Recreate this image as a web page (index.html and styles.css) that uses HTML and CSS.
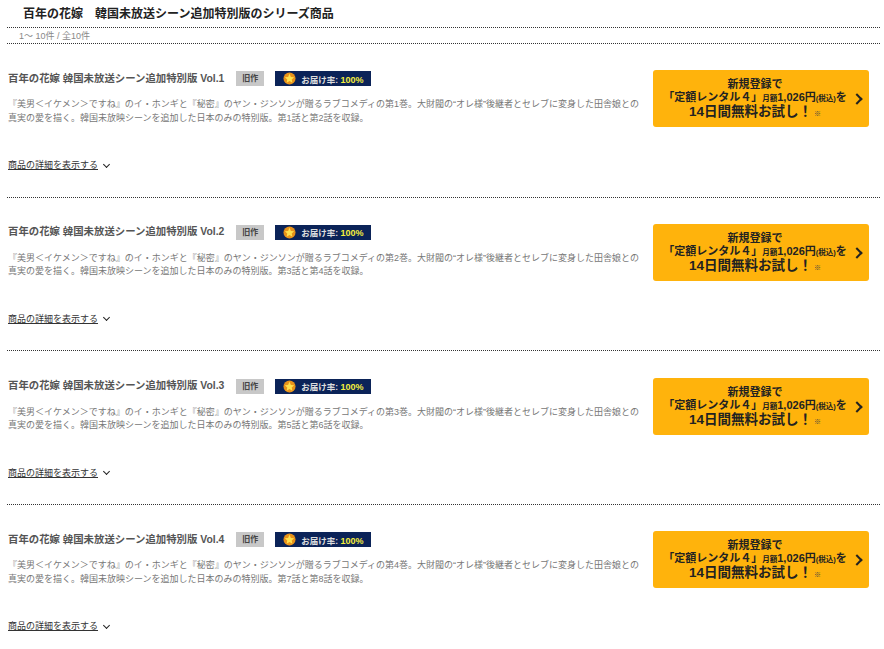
FILE: index.html
```html
<!DOCTYPE html>
<html lang="ja">
<head>
    <meta charset="UTF-8">
    <title>百年の花嫁 シリーズ商品</title>
    <link rel="stylesheet" href="styles.css">
</head>
<body>
    <!-- Header -->
    <h1 class="page-title">百年の花嫁　韓国未放送シーン追加特別版のシリーズ商品</h1>
    <div class="result-count">1～ 10件 / 全10件</div>

    <!-- Item list -->
    <div class="item">
        <div class="item-main">
            <div class="item-head">
                <h2>百年の花嫁 韓国未放送シーン追加特別版 Vol.1</h2>
                <span class="tag-old">旧作</span>
                <span class="tag-rate">
                    <svg class="star" viewBox="0 0 14 14"><circle cx="7" cy="7" r="6.5" fill="#e8921a"/><polygon points="7,2 8.5,5.3 12,5.7 9.4,8 10.1,11.5 7,9.7 3.9,11.5 4.6,8 2,5.7 5.5,5.3" fill="#ffe14d"/></svg>
                    <span>お届け率: <b>100%</b></span>
                </span>
            </div>
            <p class="desc">『美男＜イケメン＞ですね』のイ・ホンギと『秘密』のヤン・ジンソンが贈るラブコメディの第1巻。大財閥の“オレ様”後継者とセレブに変身した田舎娘との<br>真実の愛を描く。韓国未放映シーンを追加した日本のみの特別版。第1話と第2話を収録。</p>
            <div class="detail"><a href="#">商品の詳細を表示する</a><span class="caret"></span></div>
        </div>
        <a class="cta" href="#">
            <span class="cta-l1">新規登録で</span>
            <span class="cta-l2">「定額レンタル４」<small>月額</small>1,026円<small>(税込)</small>を</span>
            <span class="cta-l3">14日間無料お試し！<small>※</small></span>
        </a>
    </div>

    <div class="item">
        <div class="item-main">
            <div class="item-head">
                <h2>百年の花嫁 韓国未放送シーン追加特別版 Vol.2</h2>
                <span class="tag-old">旧作</span>
                <span class="tag-rate">
                    <svg class="star" viewBox="0 0 14 14"><circle cx="7" cy="7" r="6.5" fill="#e8921a"/><polygon points="7,2 8.5,5.3 12,5.7 9.4,8 10.1,11.5 7,9.7 3.9,11.5 4.6,8 2,5.7 5.5,5.3" fill="#ffe14d"/></svg>
                    <span>お届け率: <b>100%</b></span>
                </span>
            </div>
            <p class="desc">『美男＜イケメン＞ですね』のイ・ホンギと『秘密』のヤン・ジンソンが贈るラブコメディの第2巻。大財閥の“オレ様”後継者とセレブに変身した田舎娘との<br>真実の愛を描く。韓国未放映シーンを追加した日本のみの特別版。第3話と第4話を収録。</p>
            <div class="detail"><a href="#">商品の詳細を表示する</a><span class="caret"></span></div>
        </div>
        <a class="cta" href="#">
            <span class="cta-l1">新規登録で</span>
            <span class="cta-l2">「定額レンタル４」<small>月額</small>1,026円<small>(税込)</small>を</span>
            <span class="cta-l3">14日間無料お試し！<small>※</small></span>
        </a>
    </div>

    <div class="item">
        <div class="item-main">
            <div class="item-head">
                <h2>百年の花嫁 韓国未放送シーン追加特別版 Vol.3</h2>
                <span class="tag-old">旧作</span>
                <span class="tag-rate">
                    <svg class="star" viewBox="0 0 14 14"><circle cx="7" cy="7" r="6.5" fill="#e8921a"/><polygon points="7,2 8.5,5.3 12,5.7 9.4,8 10.1,11.5 7,9.7 3.9,11.5 4.6,8 2,5.7 5.5,5.3" fill="#ffe14d"/></svg>
                    <span>お届け率: <b>100%</b></span>
                </span>
            </div>
            <p class="desc">『美男＜イケメン＞ですね』のイ・ホンギと『秘密』のヤン・ジンソンが贈るラブコメディの第3巻。大財閥の“オレ様”後継者とセレブに変身した田舎娘との<br>真実の愛を描く。韓国未放映シーンを追加した日本のみの特別版。第5話と第6話を収録。</p>
            <div class="detail"><a href="#">商品の詳細を表示する</a><span class="caret"></span></div>
        </div>
        <a class="cta" href="#">
            <span class="cta-l1">新規登録で</span>
            <span class="cta-l2">「定額レンタル４」<small>月額</small>1,026円<small>(税込)</small>を</span>
            <span class="cta-l3">14日間無料お試し！<small>※</small></span>
        </a>
    </div>

    <div class="item">
        <div class="item-main">
            <div class="item-head">
                <h2>百年の花嫁 韓国未放送シーン追加特別版 Vol.4</h2>
                <span class="tag-old">旧作</span>
                <span class="tag-rate">
                    <svg class="star" viewBox="0 0 14 14"><circle cx="7" cy="7" r="6.5" fill="#e8921a"/><polygon points="7,2 8.5,5.3 12,5.7 9.4,8 10.1,11.5 7,9.7 3.9,11.5 4.6,8 2,5.7 5.5,5.3" fill="#ffe14d"/></svg>
                    <span>お届け率: <b>100%</b></span>
                </span>
            </div>
            <p class="desc">『美男＜イケメン＞ですね』のイ・ホンギと『秘密』のヤン・ジンソンが贈るラブコメディの第4巻。大財閥の“オレ様”後継者とセレブに変身した田舎娘との<br>真実の愛を描く。韓国未放映シーンを追加した日本のみの特別版。第7話と第8話を収録。</p>
            <div class="detail"><a href="#">商品の詳細を表示する</a><span class="caret"></span></div>
        </div>
        <a class="cta" href="#">
            <span class="cta-l1">新規登録で</span>
            <span class="cta-l2">「定額レンタル４」<small>月額</small>1,026円<small>(税込)</small>を</span>
            <span class="cta-l3">14日間無料お試し！<small>※</small></span>
        </a>
    </div>
</body>
</html>
```

FILE: styles.css
```css
body {
    font-family: "Liberation Sans", "Noto Sans CJK JP", sans-serif;
    background: white;
    color: #555;
    margin: 0;
    padding: 0 4px 0 7px;
}

.page-title {
    font-size: 12px;
    line-height: 16px;
    color: #222;
    margin: 0;
    padding: 6px 0 5px 16px;
    border-bottom: 1px dotted #333;
}

.result-count {
    font-size: 9px;
    line-height: 14px;
    color: #888;
    padding: 1px 0 0 12px;
    border-bottom: 1px dotted #333;
}

.item {
    display: flex;
    justify-content: space-between;
    height: 126.47px;
    padding-top: 26.2px;
    border-bottom: 1px dotted #333;
}

.item:last-child {
    border-bottom: none;
}

.item-main {
    width: 640px;
    padding-left: 1px;
}

.item-head {
    display: flex;
    align-items: center;
    height: 15px;
    margin-top: 1px;
}

.item-head h2 {
    font-size: 10.4px;
    font-weight: bold;
    color: #555;
    margin: 0 12px 0 0;
    padding-bottom: 3px;
}

.tag-old {
    width: 28px;
    height: 15px;
    background: #c8c8c8;
    color: #444;
    font-size: 8px;
    font-weight: bold;
    line-height: 15px;
    text-align: center;
    margin-right: 11px;
}

.tag-rate {
    display: flex;
    align-items: center;
    gap: 5px;
    width: 96px;
    height: 15px;
    box-sizing: border-box;
    padding-left: 8px;
    background: #0b2358;
    color: #ddd;
    font-size: 8.5px;
    font-weight: bold;
    white-space: nowrap;
}

.tag-rate b {
    color: #f4ee3c;
    font-size: 9px;
}

.star {
    width: 13px;
    height: 13px;
}

.desc {
    font-size: 9px;
    line-height: 13.5px;
    color: #777;
    margin: 12px 0 0 0;
    white-space: nowrap;
}

.detail {
    display: flex;
    align-items: center;
    margin-top: 34px;
    font-size: 9px;
    line-height: 12px;
}

.detail a {
    color: #333;
}

.caret {
    width: 4px;
    height: 4px;
    margin: -2px 0 0 6px;
    border-right: 1.5px solid #222;
    border-bottom: 1.5px solid #222;
    transform: rotate(45deg);
}

.cta {
    position: relative;
    display: flex;
    flex-direction: column;
    align-items: center;
    width: 216px;
    height: 57px;
    box-sizing: border-box;
    padding: 8px 12px 0 0;
    margin-right: 11px;
    background: #ffb30c;
    border-radius: 3px;
    color: #222;
    font-weight: bold;
    text-decoration: none;
    white-space: nowrap;
}

/* chevron on the right of the button */
.cta::after {
    content: "";
    position: absolute;
    top: 25px;
    right: 8px;
    width: 6px;
    height: 6px;
    border-top: 2px solid #222;
    border-right: 2px solid #222;
    transform: rotate(45deg);
}

.cta-l1 {
    font-size: 11px;
    line-height: 13px;
}

.cta-l2 {
    font-size: 11px;
    line-height: 13px;
}

.cta-l2 small {
    font-size: 7.5px;
}

.cta-l3 {
    font-size: 13.5px;
    line-height: 14px;
}

.cta-l3 small {
    font-size: 7px;
    margin-left: 2px;
    color: #444;
}
```
